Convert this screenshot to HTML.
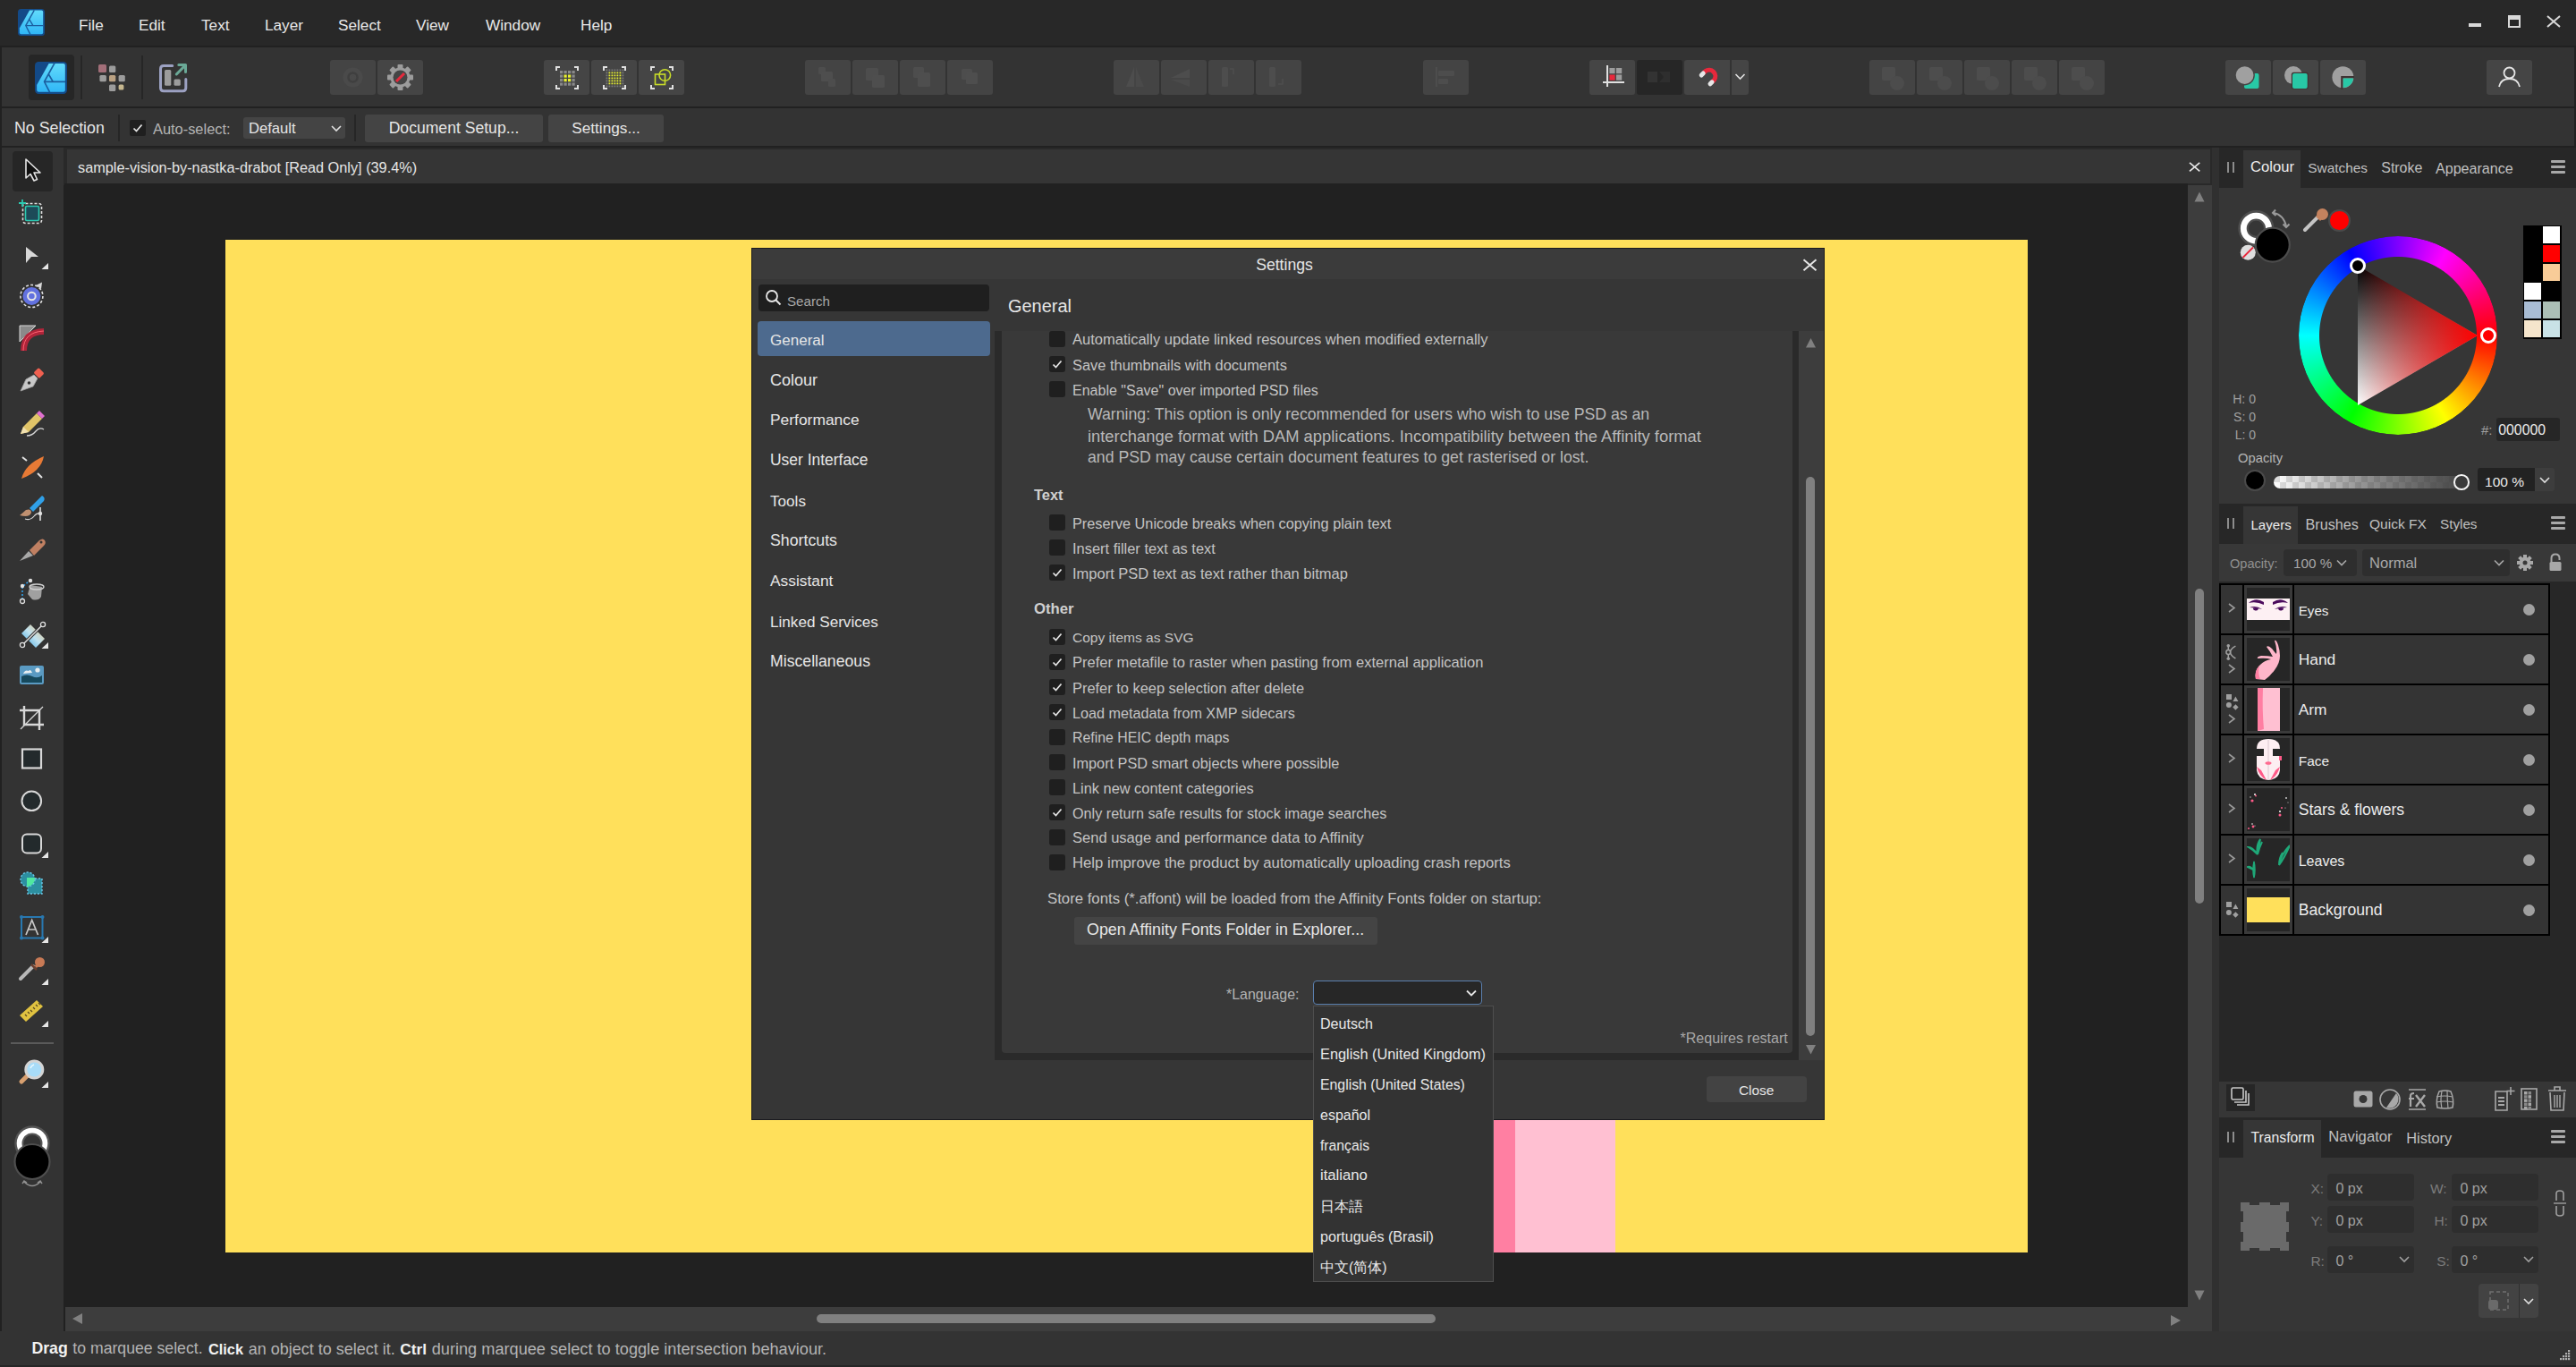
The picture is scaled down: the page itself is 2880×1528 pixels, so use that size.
<!DOCTYPE html>
<html><head><meta charset="utf-8">
<style>
*{box-sizing:border-box;margin:0;padding:0}
html,body{width:2880px;height:1528px;overflow:hidden}
body{position:relative;background:#212121;font-family:"Liberation Sans",sans-serif;color:#e6e6e6;font-size:17px}
.a{position:absolute}
.t{position:absolute;white-space:nowrap;line-height:1}
</style></head><body>
<div class="a" style="left:0px;top:0px;width:2880px;height:51px;background:#282828;"></div>
<div class="a" style="left:2px;top:53px;width:2876px;height:66px;background:#333333;"></div>
<div class="a" style="left:2px;top:121px;width:2876px;height:42px;background:#333333;"></div>
<div class="a" style="left:2px;top:165px;width:69px;height:1323px;background:#333333;"></div>
<div class="a" style="left:71px;top:165px;width:2410px;height:42px;background:#292929;"></div>
<div class="a" style="left:72px;top:205px;width:2374px;height:1256px;background:#212121;"></div>
<div class="a" style="left:75px;top:167px;width:2396px;height:38px;background:#353535;"></div>
<div class="a" style="left:2446px;top:207px;width:27px;height:1281px;background:#3d3d3d;"></div>
<div class="a" style="left:73px;top:1461px;width:2400px;height:27px;background:#3d3d3d;"></div>
<div class="a" style="left:0px;top:1488px;width:2880px;height:40px;background:#333333;"></div>
<div class="a" style="left:2481px;top:165px;width:399px;height:1323px;background:#353535;"></div>
<svg class="a" style="left:20px;top:10px" width="30.0" height="30.0" viewBox="0 0 30 30"><defs><linearGradient id="lg20" x1="0" y1="0" x2="0" y2="1"><stop offset="0" stop-color="#62dbfb"/><stop offset="1" stop-color="#30b6f6"/></linearGradient></defs>
<rect x="0" y="0" width="30" height="30" rx="3.5" fill="#134a88"/>
<path d="M13,1.6 L26.4,1.6 Q28.2,1.6 28.2,3.4 L28.2,26.4 Q28.2,28.2 26.4,28.2 L3.6,28.2 Q1.8,28.2 1.8,26.4 L1.8,21.6 Z" fill="url(#lg20)"/>
<path d="M18.3,1.4 L8.8,18.6 L13.8,28.4 M8.8,18.6 L28.4,18.6 M12.9,11.9 L16.8,18.4" stroke="#1b5fa0" stroke-width="1.4" fill="none"/></svg>
<div class="t" style="left:88.0px;top:20.4px;font-size:17.20px;color:#e8e8e8;">File</div>
<div class="t" style="left:155.0px;top:20.4px;font-size:17.20px;color:#e8e8e8;">Edit</div>
<div class="t" style="left:225.0px;top:20.4px;font-size:17.20px;color:#e8e8e8;">Text</div>
<div class="t" style="left:296.0px;top:20.4px;font-size:17.20px;color:#e8e8e8;">Layer</div>
<div class="t" style="left:378.0px;top:20.4px;font-size:17.20px;color:#e8e8e8;">Select</div>
<div class="t" style="left:465.0px;top:20.4px;font-size:17.20px;color:#e8e8e8;">View</div>
<div class="t" style="left:543.0px;top:20.4px;font-size:17.20px;color:#e8e8e8;">Window</div>
<div class="t" style="left:649.0px;top:20.4px;font-size:17.20px;color:#e8e8e8;">Help</div>
<div class="a" style="left:2760px;top:26px;width:14px;height:4px;background:#d8d8d8;"></div>
<div class="a" style="left:2804px;top:17px;width:14px;height:14px;border:2px solid #d8d8d8;border-top-width:5px"></div>
<svg class="a" style="left:2847px;top:17px;" width="16" height="14" viewBox="0 0 16 14"><path d="M1,1 L15,13 M15,1 L1,13" stroke="#d8d8d8" stroke-width="2"/></svg>
<div class="a" style="left:32px;top:61px;width:51px;height:51px;background:#262626;border-radius:4px"></div>
<svg class="a" style="left:39px;top:69px" width="36.0" height="36.0" viewBox="0 0 30 30"><defs><linearGradient id="lg39" x1="0" y1="0" x2="0" y2="1"><stop offset="0" stop-color="#62dbfb"/><stop offset="1" stop-color="#30b6f6"/></linearGradient></defs>
<rect x="0" y="0" width="30" height="30" rx="3.5" fill="#134a88"/>
<path d="M13,1.6 L26.4,1.6 Q28.2,1.6 28.2,3.4 L28.2,26.4 Q28.2,28.2 26.4,28.2 L3.6,28.2 Q1.8,28.2 1.8,26.4 L1.8,21.6 Z" fill="url(#lg39)"/>
<path d="M18.3,1.4 L8.8,18.6 L13.8,28.4 M8.8,18.6 L28.4,18.6 M12.9,11.9 L16.8,18.4" stroke="#1b5fa0" stroke-width="1.4" fill="none"/></svg>
<div class="a" style="left:90px;top:62px;width:2px;height:49px;background:#262626;"></div>
<div class="a" style="left:158px;top:62px;width:2px;height:49px;background:#262626;"></div>
<svg class="a" style="left:108px;top:70px;" width="36" height="36" viewBox="0 0 36 36"><rect x="2" y="2" width="9" height="9" rx="1.5" fill="#a36f79"/>
<rect x="14" y="3.4" width="7.3" height="7.5" rx="1.5" fill="#9c9c9c"/>
<rect x="3.4" y="14" width="7.5" height="7.3" rx="1.5" fill="#9c9c9c"/>
<rect x="14" y="14" width="7.3" height="7.3" rx="1.5" fill="#baa182"/>
<rect x="24.6" y="14" width="7.2" height="7.3" rx="1.5" fill="#9c9c9c"/>
<rect x="14" y="24.6" width="7.3" height="7.3" rx="1.5" fill="#9c9c9c"/>
<rect x="24.6" y="24.6" width="5.8" height="5.8" rx="1.5" fill="#c6b78f"/></svg>
<svg class="a" style="left:176px;top:70px;" width="34" height="34" viewBox="0 0 34 34"><path d="M16.7,3.5 L7,3.5 Q3.5,3.5 3.5,7 L3.5,28.3 Q3.5,31.8 7,31.8 L28.3,31.8 Q31.8,31.8 31.8,28.3 L31.8,18.4" stroke="#9ca1c2" stroke-width="3" fill="none" stroke-linecap="round"/>
<rect x="8" y="8" width="7.3" height="17.8" rx="1.5" fill="#9c9c9c"/>
<rect x="18.5" y="18.5" width="7.3" height="7.3" rx="1.5" fill="#9c9c9c"/>
<path d="M21.3,13 L30.5,3.6 M23.8,2.6 L31.5,2.6 L31.5,10.5" stroke="#6aa896" stroke-width="3" fill="none" stroke-linecap="round" stroke-linejoin="round"/></svg>
<div class="a" style="left:369px;top:67px;width:51px;height:39px;background:#444444;border-radius:3px"></div>
<svg class="a" style="left:369px;top:67px;" width="51" height="39" viewBox="0 0 51 39"><g fill="#4a4a4a"><circle cx="25.5" cy="19.5" r="11"/></g><circle cx="25.5" cy="19.5" r="5" fill="none" stroke="#3f3f3f" stroke-width="2.5"/><circle cx="25.5" cy="19.5" r="2" fill="#4a4a4a"/></svg>
<div class="a" style="left:422px;top:67px;width:51px;height:39px;background:#454545;border-radius:3px"></div>
<svg class="a" style="left:422px;top:67px;" width="51" height="39" viewBox="0 0 51 39"><rect x="22.5" y="5" width="6" height="6" rx="1" fill="#9c9c9c" transform="rotate(0 25.5 19.5)"/><rect x="22.5" y="5" width="6" height="6" rx="1" fill="#9c9c9c" transform="rotate(45 25.5 19.5)"/><rect x="22.5" y="5" width="6" height="6" rx="1" fill="#9c9c9c" transform="rotate(90 25.5 19.5)"/><rect x="22.5" y="5" width="6" height="6" rx="1" fill="#9c9c9c" transform="rotate(135 25.5 19.5)"/><rect x="22.5" y="5" width="6" height="6" rx="1" fill="#9c9c9c" transform="rotate(180 25.5 19.5)"/><rect x="22.5" y="5" width="6" height="6" rx="1" fill="#9c9c9c" transform="rotate(225 25.5 19.5)"/><rect x="22.5" y="5" width="6" height="6" rx="1" fill="#9c9c9c" transform="rotate(270 25.5 19.5)"/><rect x="22.5" y="5" width="6" height="6" rx="1" fill="#9c9c9c" transform="rotate(315 25.5 19.5)"/><circle cx="25.5" cy="19.5" r="11" fill="#9c9c9c"/><circle cx="25.5" cy="19.5" r="8" fill="#454545"/><path d="M21,24 L30,15" stroke="#e8283c" stroke-width="3"/></svg>
<div class="a" style="left:608px;top:67px;width:51px;height:39px;background:#454545;border-radius:3px"></div>
<div class="a" style="left:661px;top:67px;width:51px;height:39px;background:#454545;border-radius:3px"></div>
<div class="a" style="left:714px;top:67px;width:51px;height:39px;background:#454545;border-radius:3px"></div>
<svg class="a" style="left:608px;top:67px;" width="51" height="39" viewBox="0 0 51 39"><path d="M14,12 L14,8 L18,8 M34,8 L38,8 L38,12 M14,28 L14,32 L18,32 M34,32 L38,32 L38,28" stroke="#e0e0e0" stroke-width="2" fill="none"/><rect x="18.0" y="12.0" width="3.2" height="3.2" fill="#8a8a8a"/><rect x="18.0" y="16.5" width="3.2" height="3.2" fill="#8a8a8a"/><rect x="18.0" y="21.0" width="3.2" height="3.2" fill="#8a8a8a"/><rect x="18.0" y="25.5" width="3.2" height="3.2" fill="#8a8a8a"/><rect x="22.5" y="12.0" width="3.2" height="3.2" fill="#8a8a8a"/><rect x="22.5" y="16.5" width="3.2" height="3.2" fill="#e8f030"/><rect x="22.5" y="21.0" width="3.2" height="3.2" fill="#e8f030"/><rect x="22.5" y="25.5" width="3.2" height="3.2" fill="#8a8a8a"/><rect x="27.0" y="12.0" width="3.2" height="3.2" fill="#8a8a8a"/><rect x="27.0" y="16.5" width="3.2" height="3.2" fill="#e8f030"/><rect x="27.0" y="21.0" width="3.2" height="3.2" fill="#e8f030"/><rect x="27.0" y="25.5" width="3.2" height="3.2" fill="#8a8a8a"/><rect x="31.5" y="12.0" width="3.2" height="3.2" fill="#8a8a8a"/><rect x="31.5" y="16.5" width="3.2" height="3.2" fill="#8a8a8a"/><rect x="31.5" y="21.0" width="3.2" height="3.2" fill="#8a8a8a"/><rect x="31.5" y="25.5" width="3.2" height="3.2" fill="#8a8a8a"/></svg>
<svg class="a" style="left:661px;top:67px;" width="51" height="39" viewBox="0 0 51 39"><path d="M14,12 L14,8 L18,8 M34,8 L38,8 L38,12 M14,28 L14,32 L18,32 M34,32 L38,32 L38,28" stroke="#e0e0e0" stroke-width="2" fill="none"/><rect x="16.5" y="10.5" width="1.8" height="1.8" fill="#7a7a7a"/><rect x="16.5" y="13.5" width="1.8" height="1.8" fill="#7a7a7a"/><rect x="16.5" y="16.5" width="1.8" height="1.8" fill="#7a7a7a"/><rect x="16.5" y="19.5" width="1.8" height="1.8" fill="#7a7a7a"/><rect x="16.5" y="22.5" width="1.8" height="1.8" fill="#7a7a7a"/><rect x="16.5" y="25.5" width="1.8" height="1.8" fill="#7a7a7a"/><rect x="16.5" y="28.5" width="1.8" height="1.8" fill="#7a7a7a"/><rect x="19.5" y="10.5" width="1.8" height="1.8" fill="#7a7a7a"/><rect x="19.5" y="13.5" width="1.8" height="1.8" fill="#e8f030"/><rect x="19.5" y="16.5" width="1.8" height="1.8" fill="#e8f030"/><rect x="19.5" y="19.5" width="1.8" height="1.8" fill="#e8f030"/><rect x="19.5" y="22.5" width="1.8" height="1.8" fill="#e8f030"/><rect x="19.5" y="25.5" width="1.8" height="1.8" fill="#e8f030"/><rect x="19.5" y="28.5" width="1.8" height="1.8" fill="#7a7a7a"/><rect x="22.5" y="10.5" width="1.8" height="1.8" fill="#7a7a7a"/><rect x="22.5" y="13.5" width="1.8" height="1.8" fill="#e8f030"/><rect x="22.5" y="16.5" width="1.8" height="1.8" fill="#e8f030"/><rect x="22.5" y="19.5" width="1.8" height="1.8" fill="#e8f030"/><rect x="22.5" y="22.5" width="1.8" height="1.8" fill="#e8f030"/><rect x="22.5" y="25.5" width="1.8" height="1.8" fill="#e8f030"/><rect x="22.5" y="28.5" width="1.8" height="1.8" fill="#7a7a7a"/><rect x="25.5" y="10.5" width="1.8" height="1.8" fill="#7a7a7a"/><rect x="25.5" y="13.5" width="1.8" height="1.8" fill="#e8f030"/><rect x="25.5" y="16.5" width="1.8" height="1.8" fill="#e8f030"/><rect x="25.5" y="19.5" width="1.8" height="1.8" fill="#e8f030"/><rect x="25.5" y="22.5" width="1.8" height="1.8" fill="#e8f030"/><rect x="25.5" y="25.5" width="1.8" height="1.8" fill="#e8f030"/><rect x="25.5" y="28.5" width="1.8" height="1.8" fill="#7a7a7a"/><rect x="28.5" y="10.5" width="1.8" height="1.8" fill="#7a7a7a"/><rect x="28.5" y="13.5" width="1.8" height="1.8" fill="#e8f030"/><rect x="28.5" y="16.5" width="1.8" height="1.8" fill="#e8f030"/><rect x="28.5" y="19.5" width="1.8" height="1.8" fill="#e8f030"/><rect x="28.5" y="22.5" width="1.8" height="1.8" fill="#e8f030"/><rect x="28.5" y="25.5" width="1.8" height="1.8" fill="#e8f030"/><rect x="28.5" y="28.5" width="1.8" height="1.8" fill="#7a7a7a"/><rect x="31.5" y="10.5" width="1.8" height="1.8" fill="#7a7a7a"/><rect x="31.5" y="13.5" width="1.8" height="1.8" fill="#e8f030"/><rect x="31.5" y="16.5" width="1.8" height="1.8" fill="#e8f030"/><rect x="31.5" y="19.5" width="1.8" height="1.8" fill="#e8f030"/><rect x="31.5" y="22.5" width="1.8" height="1.8" fill="#e8f030"/><rect x="31.5" y="25.5" width="1.8" height="1.8" fill="#e8f030"/><rect x="31.5" y="28.5" width="1.8" height="1.8" fill="#7a7a7a"/><rect x="34.5" y="10.5" width="1.8" height="1.8" fill="#7a7a7a"/><rect x="34.5" y="13.5" width="1.8" height="1.8" fill="#7a7a7a"/><rect x="34.5" y="16.5" width="1.8" height="1.8" fill="#7a7a7a"/><rect x="34.5" y="19.5" width="1.8" height="1.8" fill="#7a7a7a"/><rect x="34.5" y="22.5" width="1.8" height="1.8" fill="#7a7a7a"/><rect x="34.5" y="25.5" width="1.8" height="1.8" fill="#7a7a7a"/><rect x="34.5" y="28.5" width="1.8" height="1.8" fill="#7a7a7a"/></svg>
<svg class="a" style="left:714px;top:67px;" width="51" height="39" viewBox="0 0 51 39"><path d="M14,12 L14,8 L18,8 M34,8 L38,8 L38,12 M14,28 L14,32 L18,32 M34,32 L38,32 L38,28" stroke="#e0e0e0" stroke-width="2" fill="none"/><rect x="18.5" y="16" width="11" height="11.5" fill="none" stroke="#c8dc28" stroke-width="1.6"/><circle cx="29.3" cy="17" r="6.3" fill="none" stroke="#c8dc28" stroke-width="1.6"/></svg>
<div class="a" style="left:900px;top:67px;width:51px;height:39px;background:#444444;border-radius:3px"></div>
<div class="a" style="left:953px;top:67px;width:51px;height:39px;background:#444444;border-radius:3px"></div>
<div class="a" style="left:1006px;top:67px;width:51px;height:39px;background:#444444;border-radius:3px"></div>
<div class="a" style="left:1059px;top:67px;width:51px;height:39px;background:#444444;border-radius:3px"></div>
<svg class="a" style="left:900px;top:67px;" width="51" height="39" viewBox="0 0 51 39"><rect x="15" y="8" width="8" height="8" rx="1.5" fill="#4d4d4d"/><rect x="18" y="13" width="13" height="11" rx="1.5" fill="#4e4e4e"/><rect x="26" y="21" width="8" height="9" rx="1.5" fill="#4d4d4d"/></svg>
<svg class="a" style="left:953px;top:67px;" width="51" height="39" viewBox="0 0 51 39"><rect x="15" y="9" width="14" height="14" rx="1.5" fill="#4d4d4d"/><rect x="22" y="17" width="14" height="14" rx="1.5" fill="#4e4e4e"/></svg>
<svg class="a" style="left:1006px;top:67px;" width="51" height="39" viewBox="0 0 51 39"><rect x="15" y="8" width="12" height="12" rx="1.5" fill="#4d4d4d"/><rect x="20" y="14" width="14" height="16" rx="1.5" fill="#4e4e4e"/></svg>
<svg class="a" style="left:1059px;top:67px;" width="51" height="39" viewBox="0 0 51 39"><rect x="16" y="10" width="12" height="12" rx="1.5" fill="#4d4d4d"/><rect x="21" y="14" width="13" height="13" rx="1.5" fill="#4e4e4e"/></svg>
<div class="a" style="left:1245px;top:67px;width:51px;height:39px;background:#444444;border-radius:3px"></div>
<div class="a" style="left:1298px;top:67px;width:51px;height:39px;background:#444444;border-radius:3px"></div>
<div class="a" style="left:1351px;top:67px;width:51px;height:39px;background:#444444;border-radius:3px"></div>
<div class="a" style="left:1404px;top:67px;width:51px;height:39px;background:#444444;border-radius:3px"></div>
<svg class="a" style="left:1245px;top:67px;" width="51" height="39" viewBox="0 0 51 39"><path d="M14,30 L23,8 L23,30 Z" fill="#4d4d4d"/><path d="M25,8 L25,30 L34,30 Z" fill="#4a4a4a"/></svg>
<svg class="a" style="left:1298px;top:67px;" width="51" height="39" viewBox="0 0 51 39"><path d="M11,20 L32,10 L32,20 Z" fill="#4d4d4d"/><path d="M11,22 L32,22 L32,30 Z" fill="#4a4a4a"/></svg>
<svg class="a" style="left:1351px;top:67px;" width="51" height="39" viewBox="0 0 51 39"><rect x="15" y="8" width="7" height="22" rx="1.5" fill="#4d4d4d"/><path d="M28,16 L28,10 L24,10" stroke="#4d4d4d" stroke-width="1.5" fill="none"/></svg>
<svg class="a" style="left:1404px;top:67px;" width="51" height="39" viewBox="0 0 51 39"><rect x="15" y="8" width="7" height="22" rx="1.5" fill="#4d4d4d"/><path d="M30,21 L30,27 L25,27" stroke="#4d4d4d" stroke-width="1.5" fill="none"/></svg>
<div class="a" style="left:1591px;top:67px;width:51px;height:39px;background:#444444;border-radius:3px"></div>
<svg class="a" style="left:1591px;top:67px;" width="51" height="39" viewBox="0 0 51 39"><rect x="14" y="8" width="2" height="22" fill="#4d4d4d"/><rect x="17" y="12" width="18" height="6" rx="1" fill="#4d4d4d"/><rect x="17" y="21" width="11" height="6" rx="1" fill="#4d4d4d"/></svg>
<div class="a" style="left:1777px;top:67px;width:51px;height:39px;background:#454545;border-radius:3px"></div>
<svg class="a" style="left:1777px;top:67px;" width="51" height="39" viewBox="0 0 51 39"><path d="M20,6 L20,30 M15,25 L39,25" stroke="#e0e0e0" stroke-width="2"/><rect x="22.4" y="9" width="6.2" height="6.2" fill="#9c9c9c"/><rect x="30" y="9" width="6.2" height="6.2" fill="#9c9c9c"/><rect x="22.4" y="16.5" width="6.2" height="6.2" fill="#e8283c"/><rect x="30" y="16.5" width="6.2" height="6.2" fill="#9c9c9c"/></svg>
<div class="a" style="left:1830px;top:67px;width:51px;height:39px;background:#262626;border-radius:3px"></div>
<svg class="a" style="left:1830px;top:67px;" width="51" height="39" viewBox="0 0 51 39"><rect x="12" y="13" width="11" height="12" fill="#333"/><path d="M25,13 L37,13 L37,25 L25,25 L30,19 Z" fill="#2e2e2e"/></svg>
<div class="a" style="left:1883px;top:67px;width:72px;height:39px;background:#454545;border-radius:3px"></div>
<div class="a" style="left:1934px;top:67px;width:2px;height:39px;background:#333333;"></div>
<svg class="a" style="left:1883px;top:67px;" width="51" height="39" viewBox="0 0 51 39"><path d="M21.2,15 L23.6,12.6 A7,7 0 0 1 33.4,22.4 L31,24.8" stroke="#e8283c" stroke-width="5" fill="none"/><path d="M21.2,15 L19.2,17 M31,24.8 L29,26.8" stroke="#e6e6e6" stroke-width="5" stroke-linecap="round"/></svg>
<svg class="a" style="left:1936px;top:67px;" width="19" height="39" viewBox="0 0 19 39"><path d="M4.5,16 L9.5,21 L14.5,16" stroke="#e0e0e0" stroke-width="1.6" fill="none"/></svg>
<div class="a" style="left:2090px;top:67px;width:51px;height:39px;background:#444444;border-radius:3px"></div>
<div class="a" style="left:2143px;top:67px;width:51px;height:39px;background:#444444;border-radius:3px"></div>
<div class="a" style="left:2196px;top:67px;width:51px;height:39px;background:#444444;border-radius:3px"></div>
<div class="a" style="left:2249px;top:67px;width:51px;height:39px;background:#444444;border-radius:3px"></div>
<div class="a" style="left:2302px;top:67px;width:51px;height:39px;background:#444444;border-radius:3px"></div>
<svg class="a" style="left:2090px;top:67px;" width="51" height="39" viewBox="0 0 51 39"><rect x="14" y="8" width="15" height="15" rx="2" fill="#4d4d4d"/><circle cx="31" cy="26" r="8" fill="#4c4c4c"/></svg>
<svg class="a" style="left:2143px;top:67px;" width="51" height="39" viewBox="0 0 51 39"><rect x="14" y="8" width="15" height="15" rx="2" fill="#4d4d4d"/><circle cx="31" cy="26" r="8" fill="#4c4c4c"/></svg>
<svg class="a" style="left:2196px;top:67px;" width="51" height="39" viewBox="0 0 51 39"><rect x="14" y="8" width="15" height="15" rx="2" fill="#4d4d4d"/><circle cx="31" cy="26" r="8" fill="#4c4c4c"/></svg>
<svg class="a" style="left:2249px;top:67px;" width="51" height="39" viewBox="0 0 51 39"><rect x="14" y="8" width="15" height="15" rx="2" fill="#4d4d4d"/><circle cx="31" cy="26" r="8" fill="#4c4c4c"/></svg>
<svg class="a" style="left:2302px;top:67px;" width="51" height="39" viewBox="0 0 51 39"><rect x="14" y="8" width="15" height="15" rx="2" fill="#4d4d4d"/><circle cx="31" cy="26" r="8" fill="#4c4c4c"/></svg>
<div class="a" style="left:2488px;top:67px;width:51px;height:39px;background:#454545;border-radius:3px"></div>
<div class="a" style="left:2541px;top:67px;width:51px;height:39px;background:#454545;border-radius:3px"></div>
<div class="a" style="left:2594px;top:67px;width:51px;height:39px;background:#454545;border-radius:3px"></div>
<svg class="a" style="left:2488px;top:67px;" width="51" height="39" viewBox="0 0 51 39"><rect x="21" y="14.9" width="16.5" height="17" rx="2" fill="#28c8a6"/><circle cx="21.6" cy="17.1" r="11.3" fill="#454545"/><circle cx="21.6" cy="17.1" r="9.9" fill="#a0a0a0"/></svg>
<svg class="a" style="left:2541px;top:67px;" width="51" height="39" viewBox="0 0 51 39"><circle cx="23" cy="17.1" r="10" fill="#a0a0a0"/><rect x="20.8" y="13.8" width="19" height="19" rx="2.5" fill="#3f3333"/><rect x="22" y="15" width="16.7" height="17" rx="2" fill="#28c8a6"/></svg>
<svg class="a" style="left:2594px;top:67px;" width="51" height="39" viewBox="0 0 51 39"><circle cx="25.4" cy="19.3" r="12" fill="#a0a0a0"/><path d="M24.4,33 L24.4,19.3 L38,19.3" stroke="#3f3333" stroke-width="2.4" fill="none"/><path d="M25.6,20.5 L37.2,20.5 A12,12 0 0 1 25.6,31.2 Z" fill="#28c8a6"/></svg>
<div class="a" style="left:2780px;top:67px;width:51px;height:39px;background:#454545;border-radius:3px"></div>
<svg class="a" style="left:2780px;top:67px;" width="51" height="39" viewBox="0 0 51 39"><circle cx="25.5" cy="14.5" r="6" fill="none" stroke="#e6e6e6" stroke-width="1.8"/><path d="M14,30 Q16,21 25.5,21 Q35,21 37,30" fill="none" stroke="#e6e6e6" stroke-width="1.8"/></svg>
<div class="t" style="left:16.0px;top:134.9px;font-size:17.80px;color:#e6e6e6;">No Selection</div>
<div class="a" style="left:132px;top:128px;width:2px;height:30px;background:#262626;"></div>
<div class="a" style="left:145px;top:134px;width:18px;height:18px;background:#1f1f1f;border-radius:2px"></div>
<svg class="a" style="left:145px;top:134px;" width="18" height="18" viewBox="0 0 18 18"><path d="M4.5,9.5 L7.5,12.5 L13.5,5.5" stroke="#e6e6e6" stroke-width="1.7" fill="none"/></svg>
<div class="t" style="left:171.0px;top:136.1px;font-size:16.40px;color:#b4b4b4;">Auto-select:</div>
<div class="a" style="left:272px;top:131px;width:114px;height:24px;background:#444444;border-radius:3px"></div>
<div class="t" style="left:278.0px;top:135.9px;font-size:16.60px;color:#e6e6e6;">Default</div>
<svg class="a" style="left:367px;top:134px;" width="18" height="18" viewBox="0 0 18 18"><path d="M4,7 L9,12 L14,7" stroke="#e0e0e0" stroke-width="1.6" fill="none"/></svg>
<div class="a" style="left:396px;top:128px;width:2px;height:30px;background:#262626;"></div>
<div class="a" style="left:408px;top:128px;width:199px;height:31px;background:#444444;border-radius:3px"></div>
<div class="t" style="left:207.5px;width:600px;text-align:center;top:135.1px;font-size:17.60px;color:#e6e6e6;font-weight:400">Document Setup...</div>
<div class="a" style="left:613px;top:128px;width:129px;height:31px;background:#444444;border-radius:3px"></div>
<div class="t" style="left:377.5px;width:600px;text-align:center;top:135.4px;font-size:17.20px;color:#e6e6e6;font-weight:400">Settings...</div>
<div class="t" style="left:87.0px;top:178.7px;font-size:16.30px;color:#e6e6e6;">sample-vision-by-nastka-drabot [Read Only] (39.4%)</div>
<svg class="a" style="left:2446px;top:180px;" width="15" height="13" viewBox="0 0 15 13"><path d="M2,1.8 L13.3,11.3 M13.3,1.8 L2,11.3" stroke="#e6e6e6" stroke-width="1.7"/></svg>
<div class="a" style="left:14px;top:169px;width:45px;height:45px;background:#262626;border-radius:4px"></div>
<svg class="a" style="left:20px;top:172px;" width="36" height="36" viewBox="0 0 36 36"><path d="M9,6 L9,27 L14,22.5 L18,30 L21.5,28.5 L18,21 L25,21 Z" fill="#111" stroke="#e6e6e6" stroke-width="1.6" stroke-linejoin="round"/></svg>
<svg class="a" style="left:20px;top:220px;" width="36" height="36" viewBox="0 0 36 36"><rect x="5.5" y="7.5" width="21" height="22" rx="3" fill="none" stroke="#e0e0e0" stroke-width="1.6" stroke-dasharray="3 2"/><rect x="8.5" y="10.5" width="15" height="16" rx="1.5" fill="#1d4a58" stroke="#2cc8b0" stroke-width="1.6"/><path d="M5,3 L5,11 M1,7 L9,7" stroke="#2cc8b0" stroke-width="1.8"/></svg>
<svg class="a" style="left:20px;top:268px;" width="36" height="36" viewBox="0 0 36 36"><path d="M9,8 L9,26 L15,19 L23,19 Z" fill="#d8d8d8"/></svg>
<svg class="a" style="left:45px;top:293px;" width="10" height="10" viewBox="0 0 10 10"><path d="M9,1 L9,8 L1.5,8 Z" fill="#e6e6e6"/></svg>
<svg class="a" style="left:18px;top:313px;" width="36" height="36" viewBox="0 0 36 36"><circle cx="17.4" cy="18" r="12.5" fill="none" stroke="#e0e0e0" stroke-width="1.6" stroke-dasharray="3 2.2"/><circle cx="17.4" cy="18" r="10" fill="#6271df"/><circle cx="17.4" cy="18" r="4.3" fill="none" stroke="#e6e6e6" stroke-width="2"/><path d="M22,6 L29,2.5 L28,10 Z" fill="#d8d8d8"/></svg>
<svg class="a" style="left:20px;top:362px;" width="36" height="36" viewBox="0 0 36 36"><path d="M2,2 L20,2 L2,20 Z" fill="#8a8a8a" stroke="#d8d8d8" stroke-width="1"/><path d="M3,30 Q3,6 29,5 L29,12 Q10,12 10,30 Z" fill="#b0253a"/><path d="M6,30 Q6,9 29,8" stroke="#ff6070" stroke-width="1" fill="none"/></svg>
<svg class="a" style="left:20px;top:410px;" width="36" height="36" viewBox="0 0 36 36"><path d="M3,27 L9,14 L18,9 L22,13 L17,22 Z" fill="#c8c8c8" stroke="#a0a0a0" stroke-width="0.8"/><circle cx="12.5" cy="18" r="1.8" fill="#333"/><rect x="19" y="3" width="9" height="8" rx="1.5" fill="#f06050" transform="rotate(45 23.5 7)"/></svg>
<svg class="a" style="left:20px;top:457px;" width="36" height="36" viewBox="0 0 36 36"><path d="M3,28 L6,20 L21,5 L27,11 L12,26 Z" fill="#e0c468"/><path d="M3,28 L6,20 L12,26 Z" fill="#f0e0b0"/><path d="M21,5 L24,2 L30,8 L27,11 Z" fill="#e070d0"/><path d="M10,30 Q16,30 20,25 Q24,20 29,23" stroke="#d8d8d8" stroke-width="1.3" fill="none"/></svg>
<svg class="a" style="left:20px;top:505px;" width="36" height="36" viewBox="0 0 36 36"><path d="M4,30 Q8,14 29,5 Q26,22 4,30 Z" fill="#e87a35"/><path d="M5,6 L10,10 M22,24 L27,29" stroke="#e0e0e0" stroke-width="2"/></svg>
<svg class="a" style="left:20px;top:551px;" width="36" height="36" viewBox="0 0 36 36"><path d="M13,17 L27,3 Q31,5 29,9 L17,21 Z" fill="#30a0e8"/><path d="M2,25 Q6,22 9,19 Q15,17 15,22 Q13,28 2,25 Z" fill="#c09070"/><path d="M8,29 Q14,31 18,26 Q21,22 25,23" stroke="#d8d8d8" stroke-width="1.2" fill="none"/><path d="M25,16 L25,31" stroke="#e0e0e0" stroke-width="1.6"/><circle cx="25" cy="23" r="2.2" fill="#e0e0e0"/></svg>
<svg class="a" style="left:20px;top:598px;" width="36" height="36" viewBox="0 0 36 36"><path d="M2,29 L12,18 L17,23 Z" fill="#a8a8a8"/><path d="M13,17 L24,6 Q28,3 30,6 Q32,9 29,12 L18,23 Z" fill="#c08062"/><circle cx="26" cy="8" r="1.5" fill="#333"/></svg>
<svg class="a" style="left:20px;top:645px;" width="36" height="36" viewBox="0 0 36 36"><path d="M14,9 L27,11 L26,22 Q23,27 16,25 L11,19 Z" fill="#a0a0a0"/><ellipse cx="21" cy="11" rx="8" ry="3" fill="none" stroke="#d0d0d0" stroke-width="1.4"/><path d="M5,25 L5,11 L13,4" stroke="#30a0e8" stroke-width="1.6" stroke-dasharray="2 2" fill="none"/><circle cx="5" cy="27" r="2.5" fill="none" stroke="#e0e0e0" stroke-width="1.3"/><circle cx="5" cy="10" r="2.2" fill="#e0e0e0"/><circle cx="14" cy="4" r="2.2" fill="#e0e0e0"/></svg>
<svg class="a" style="left:20px;top:692px;" width="36" height="36" viewBox="0 0 36 36"><defs><linearGradient id="gt1" x1="0" y1="1" x2="1" y2="0"><stop offset="0" stop-color="#30a0e0"/><stop offset="0.5" stop-color="#bfe2f0"/><stop offset="1" stop-color="#e8c080"/></linearGradient></defs><path d="M4,16 L14,6 L30,22 L20,32 Z" fill="url(#gt1)" transform="rotate(0)"/><path d="M5,29 L28,6" stroke="#333" stroke-width="3.5"/><path d="M5,29 L28,6" stroke="#e0e0e0" stroke-width="1.4"/><circle cx="5" cy="29" r="2.6" fill="#333" stroke="#e0e0e0" stroke-width="1.3"/><circle cx="28" cy="6" r="2.6" fill="#333" stroke="#e0e0e0" stroke-width="1.3"/></svg>
<svg class="a" style="left:45px;top:717px;" width="10" height="10" viewBox="0 0 10 10"><path d="M9,1 L9,8 L1.5,8 Z" fill="#e6e6e6"/></svg>
<svg class="a" style="left:20px;top:740px;" width="36" height="36" viewBox="0 0 36 36"><rect x="2" y="4" width="27" height="21" rx="2" fill="#5a9ac2"/><path d="M4,16 Q10,13 16,16 Q22,19 27,15 L27,23 L4,23 Z" fill="#17495c"/><circle cx="22" cy="9" r="2.6" fill="#e8eef0"/><path d="M6,13 Q8,8 12,10 Q14,7 16,12 Z" fill="#e8eef0"/></svg>
<svg class="a" style="left:20px;top:786px;" width="36" height="36" viewBox="0 0 36 36"><path d="M7,3 L7,24 L29,24 M2,8 L24,8 L24,30" stroke="#d8d8d8" stroke-width="2.4" fill="none"/><path d="M3,29 L28,4" stroke="#d8d8d8" stroke-width="1.2"/></svg>
<svg class="a" style="left:20px;top:833px;" width="36" height="36" viewBox="0 0 36 36"><rect x="5" y="4.5" width="21" height="21" fill="#232a2c" stroke="#d8d8d8" stroke-width="2.2"/></svg>
<svg class="a" style="left:20px;top:880px;" width="36" height="36" viewBox="0 0 36 36"><circle cx="15.3" cy="15.3" r="10.8" fill="#232a2c" stroke="#d8d8d8" stroke-width="2"/></svg>
<svg class="a" style="left:20px;top:928px;" width="36" height="36" viewBox="0 0 36 36"><rect x="5" y="4.5" width="21" height="21" rx="5" fill="#232a2c" stroke="#d8d8d8" stroke-width="2"/></svg>
<svg class="a" style="left:45px;top:951px;" width="10" height="10" viewBox="0 0 10 10"><path d="M9,1 L9,8 L1.5,8 Z" fill="#e6e6e6"/></svg>
<svg class="a" style="left:20px;top:973px;" width="36" height="36" viewBox="0 0 36 36"><rect x="11" y="9" width="16" height="17" fill="#2c8fa0" stroke="#6cc8e8" stroke-width="1.4" stroke-dasharray="2.2 1.8"/><circle cx="11" cy="10" r="8" fill="#2c8fa0" stroke="#6cc8e8" stroke-width="1.4" stroke-dasharray="2.2 1.8"/><path d="M10,8 L19,8 A10,10 0 0 1 10,18.5 Z" fill="#50e8a0"/></svg>
<svg class="a" style="left:20px;top:1021px;" width="36" height="36" viewBox="0 0 36 36"><rect x="4" y="4" width="23.5" height="23.5" fill="none" stroke="#2878b0" stroke-width="2"/><circle cx="4" cy="4" r="2" fill="#2878b0"/><circle cx="27.5" cy="4" r="2" fill="#2878b0"/><circle cx="4" cy="27.5" r="2" fill="#2878b0"/><circle cx="27.5" cy="27.5" r="2" fill="#2878b0"/><path d="M9,24 L15.7,7.5 L22.5,24 M11.5,18 L20,18" stroke="#c8c8c8" stroke-width="1.7" fill="none"/></svg>
<svg class="a" style="left:45px;top:1046px;" width="10" height="10" viewBox="0 0 10 10"><path d="M9,1 L9,8 L1.5,8 Z" fill="#e6e6e6"/></svg>
<svg class="a" style="left:20px;top:1068px;" width="36" height="36" viewBox="0 0 36 36"><path d="M3,26 L17,12" stroke="#b8b8b8" stroke-width="4" stroke-linecap="round"/><path d="M15,10 L21,16" stroke="#6a4030" stroke-width="2.5"/><circle cx="24.5" cy="7.5" r="5.5" fill="#c87a55"/><path d="M18,11 L21,14 L25,10 Z" fill="#c87a55"/></svg>
<svg class="a" style="left:45px;top:1093px;" width="10" height="10" viewBox="0 0 10 10"><path d="M9,1 L9,8 L1.5,8 Z" fill="#e6e6e6"/></svg>
<svg class="a" style="left:20px;top:1114px;" width="36" height="36" viewBox="0 0 36 36"><path d="M2,21 L21,4 L28,11 L9,28 Z" fill="#e0c240"/><path d="M8,20 L10,22 M11,17 L13,19 M14,15 L16,17 M17,12 L19,14 M20,9 L22,11 M23,7 L25,9" stroke="#5a4a20" stroke-width="1.2"/></svg>
<svg class="a" style="left:45px;top:1140px;" width="10" height="10" viewBox="0 0 10 10"><path d="M9,1 L9,8 L1.5,8 Z" fill="#e6e6e6"/></svg>
<div class="a" style="left:12px;top:1165px;width:48px;height:2px;background:#5a5a5a;"></div>
<svg class="a" style="left:20px;top:1180px;" width="36" height="36" viewBox="0 0 36 36"><path d="M4,29 L12,21" stroke="#d8a070" stroke-width="5" stroke-linecap="round"/><circle cx="18.3" cy="15.5" r="9.5" fill="#a8dcf8" stroke="#d4d4d4" stroke-width="3"/><path d="M14,14 Q15,11 18,10" stroke="#e8f8ff" stroke-width="1.5" fill="none"/></svg>
<svg class="a" style="left:45px;top:1208px;" width="10" height="10" viewBox="0 0 10 10"><path d="M9,1 L9,8 L1.5,8 Z" fill="#e6e6e6"/></svg>
<svg class="a" style="left:10px;top:1255px;" width="54" height="80" viewBox="0 0 54 80"><circle cx="26" cy="23" r="18.5" fill="#ffffff" stroke="#555" stroke-width="2.4"/><circle cx="26" cy="23" r="10.5" fill="#333" stroke="#555" stroke-width="2"/><circle cx="26" cy="43.5" r="19.5" fill="#000" stroke="#4e4e4e" stroke-width="2.2"/><path d="M17,66 Q26,75 35,66 M15,68 L17,65 L20,67 M37,68 L35,65 L32,67" stroke="#909090" stroke-width="1.5" fill="none"/></svg>
<div class="a" style="left:252px;top:268px;width:2015px;height:1132px;background:#ffe05b;"></div>
<div class="a" style="left:1670px;top:1252px;width:24px;height:148px;background:#ff7fa2;"></div>
<div class="a" style="left:1694px;top:1252px;width:112px;height:148px;background:#ffc0d2;"></div>
<div class="a" style="left:840px;top:277px;width:1200px;height:975px;background:#363636;border:1px solid #1a1a1e"></div>
<div class="a" style="left:841px;top:278px;width:1198px;height:34px;background:#3b3b3b;"></div>
<div class="t" style="left:1136.0px;width:600px;text-align:center;top:288.1px;font-size:17.60px;color:#e6e6e6;font-weight:400">Settings</div>
<svg class="a" style="left:2015px;top:289px;" width="17" height="15" viewBox="0 0 17 15"><path d="M1.5,1.2 L15.5,13.3 M15.5,1.2 L1.5,13.3" stroke="#e6e6e6" stroke-width="1.9"/></svg>
<div class="a" style="left:848px;top:318px;width:258px;height:30px;background:#1f1f1f;border-radius:4px"></div>
<svg class="a" style="left:854px;top:322px;" width="22" height="22" viewBox="0 0 22 22"><circle cx="9" cy="9" r="6" fill="none" stroke="#e6e6e6" stroke-width="1.8"/><path d="M13.3,13.3 L18.5,18.5" stroke="#e6e6e6" stroke-width="2"/></svg>
<div class="t" style="left:880.0px;top:329.2px;font-size:15.15px;color:#a8a8a8;">Search</div>
<div class="a" style="left:847px;top:359px;width:260px;height:39px;background:#4d6a8e;border-radius:4px"></div>
<div class="t" style="left:861.0px;top:371.6px;font-size:17.03px;color:#e6e6e6;">General</div>
<div class="t" style="left:861.0px;top:415.7px;font-size:18.02px;color:#e6e6e6;">Colour</div>
<div class="t" style="left:861.0px;top:461.3px;font-size:17.42px;color:#e6e6e6;">Performance</div>
<div class="t" style="left:861.0px;top:506.2px;font-size:17.44px;color:#e6e6e6;">User Interface</div>
<div class="t" style="left:861.0px;top:551.5px;font-size:17.13px;color:#e6e6e6;">Tools</div>
<div class="t" style="left:861.0px;top:596.0px;font-size:17.75px;color:#e6e6e6;">Shortcuts</div>
<div class="t" style="left:861.0px;top:641.3px;font-size:17.38px;color:#e6e6e6;">Assistant</div>
<div class="t" style="left:861.0px;top:686.5px;font-size:17.14px;color:#e6e6e6;">Linked Services</div>
<div class="t" style="left:861.0px;top:731.0px;font-size:17.68px;color:#e6e6e6;">Miscellaneous</div>
<div class="t" style="left:1127.0px;top:333.1px;font-size:19.96px;color:#e6e6e6;">General</div>
<div class="a" style="left:1112px;top:370px;width:899px;height:815px;background:#2a2a2a;"></div>
<div class="a" style="left:1120px;top:370px;width:884px;height:807px;background:#393939;border-radius:0 0 4px 4px"></div>
<div class="a" style="left:2011px;top:370px;width:28px;height:815px;background:#3d3d3d;"></div>
<svg class="a" style="left:2018px;top:377px;" width="13" height="13" viewBox="0 0 13 13"><path d="M6.5,1 L12,11.5 L1,11.5 Z" fill="#808080"/></svg>
<div class="a" style="left:2019px;top:533px;width:10px;height:625px;background:#808080;border-radius:5px"></div>
<svg class="a" style="left:2018px;top:1167px;" width="13" height="13" viewBox="0 0 13 13"><path d="M1,1 L12,1 L6.5,11.5 Z" fill="#808080"/></svg>
<div class="a" style="left:1173px;top:370px;width:18px;height:18px;background:#1f1f1f;border-radius:3px"></div>
<div class="t" style="left:1199.0px;top:371.6px;font-size:16.53px;color:#c4c4c4;">Automatically update linked resources when modified externally</div>
<div class="a" style="left:1173px;top:398px;width:18px;height:18px;background:#1f1f1f;border-radius:3px"></div>
<svg class="a" style="left:1173px;top:398px;" width="18" height="18" viewBox="0 0 18 18"><path d="M4.5,9.5 L7.5,12.5 L13.5,5.5" stroke="#e6e6e6" stroke-width="1.7" fill="none"/></svg>
<div class="t" style="left:1199.0px;top:399.7px;font-size:16.42px;color:#c4c4c4;">Save thumbnails with documents</div>
<div class="a" style="left:1173px;top:426px;width:18px;height:18px;background:#1f1f1f;border-radius:3px"></div>
<div class="t" style="left:1199.0px;top:428.0px;font-size:16.02px;color:#c4c4c4;">Enable &quot;Save&quot; over imported PSD files</div>
<div class="t" style="left:1216.0px;top:455.4px;font-size:17.71px;color:#b8b8b8;">Warning: This option is only recommended for users who wish to use PSD as an</div>
<div class="t" style="left:1216.0px;top:478.9px;font-size:18.35px;color:#b8b8b8;">interchange format with DAM applications. Incompatibility between the Affinity format</div>
<div class="t" style="left:1216.0px;top:503.4px;font-size:17.71px;color:#b8b8b8;">and PSD may cause certain document features to get rasterised or lost.</div>
<div class="t" style="left:1156.0px;top:545.1px;font-size:16.40px;color:#d0d0d0;font-weight:700;">Text</div>
<div class="a" style="left:1173px;top:575px;width:18px;height:18px;background:#1f1f1f;border-radius:3px"></div>
<div class="t" style="left:1199.0px;top:576.8px;font-size:16.27px;color:#c4c4c4;">Preserve Unicode breaks when copying plain text</div>
<div class="a" style="left:1173px;top:603px;width:18px;height:18px;background:#1f1f1f;border-radius:3px"></div>
<div class="t" style="left:1199.0px;top:604.7px;font-size:16.45px;color:#c4c4c4;">Insert filler text as text</div>
<div class="a" style="left:1173px;top:631px;width:18px;height:18px;background:#1f1f1f;border-radius:3px"></div>
<svg class="a" style="left:1173px;top:631px;" width="18" height="18" viewBox="0 0 18 18"><path d="M4.5,9.5 L7.5,12.5 L13.5,5.5" stroke="#e6e6e6" stroke-width="1.7" fill="none"/></svg>
<div class="t" style="left:1199.0px;top:632.6px;font-size:16.49px;color:#c4c4c4;">Import PSD text as text rather than bitmap</div>
<div class="t" style="left:1156.0px;top:672.8px;font-size:16.72px;color:#d0d0d0;font-weight:700;">Other</div>
<div class="a" style="left:1173px;top:703px;width:18px;height:18px;background:#1f1f1f;border-radius:3px"></div>
<svg class="a" style="left:1173px;top:703px;" width="18" height="18" viewBox="0 0 18 18"><path d="M4.5,9.5 L7.5,12.5 L13.5,5.5" stroke="#e6e6e6" stroke-width="1.7" fill="none"/></svg>
<div class="t" style="left:1199.0px;top:705.4px;font-size:15.56px;color:#c4c4c4;">Copy items as SVG</div>
<div class="a" style="left:1173px;top:731px;width:18px;height:18px;background:#1f1f1f;border-radius:3px"></div>
<svg class="a" style="left:1173px;top:731px;" width="18" height="18" viewBox="0 0 18 18"><path d="M4.5,9.5 L7.5,12.5 L13.5,5.5" stroke="#e6e6e6" stroke-width="1.7" fill="none"/></svg>
<div class="t" style="left:1199.0px;top:732.6px;font-size:16.55px;color:#c4c4c4;">Prefer metafile to raster when pasting from external application</div>
<div class="a" style="left:1173px;top:759px;width:18px;height:18px;background:#1f1f1f;border-radius:3px"></div>
<svg class="a" style="left:1173px;top:759px;" width="18" height="18" viewBox="0 0 18 18"><path d="M4.5,9.5 L7.5,12.5 L13.5,5.5" stroke="#e6e6e6" stroke-width="1.7" fill="none"/></svg>
<div class="t" style="left:1199.0px;top:760.7px;font-size:16.41px;color:#c4c4c4;">Prefer to keep selection after delete</div>
<div class="a" style="left:1173px;top:787px;width:18px;height:18px;background:#1f1f1f;border-radius:3px"></div>
<svg class="a" style="left:1173px;top:787px;" width="18" height="18" viewBox="0 0 18 18"><path d="M4.5,9.5 L7.5,12.5 L13.5,5.5" stroke="#e6e6e6" stroke-width="1.7" fill="none"/></svg>
<div class="t" style="left:1199.0px;top:788.9px;font-size:16.19px;color:#c4c4c4;">Load metadata from XMP sidecars</div>
<div class="a" style="left:1173px;top:815px;width:18px;height:18px;background:#1f1f1f;border-radius:3px"></div>
<div class="t" style="left:1199.0px;top:817.2px;font-size:15.86px;color:#c4c4c4;">Refine HEIC depth maps</div>
<div class="a" style="left:1173px;top:843px;width:18px;height:18px;background:#1f1f1f;border-radius:3px"></div>
<div class="t" style="left:1199.0px;top:844.8px;font-size:16.27px;color:#c4c4c4;">Import PSD smart objects where possible</div>
<div class="a" style="left:1173px;top:871px;width:18px;height:18px;background:#1f1f1f;border-radius:3px"></div>
<div class="t" style="left:1199.0px;top:872.7px;font-size:16.38px;color:#c4c4c4;">Link new content categories</div>
<div class="a" style="left:1173px;top:899px;width:18px;height:18px;background:#1f1f1f;border-radius:3px"></div>
<svg class="a" style="left:1173px;top:899px;" width="18" height="18" viewBox="0 0 18 18"><path d="M4.5,9.5 L7.5,12.5 L13.5,5.5" stroke="#e6e6e6" stroke-width="1.7" fill="none"/></svg>
<div class="t" style="left:1199.0px;top:900.9px;font-size:16.18px;color:#c4c4c4;">Only return safe results for stock image searches</div>
<div class="a" style="left:1173px;top:927px;width:18px;height:18px;background:#1f1f1f;border-radius:3px"></div>
<div class="t" style="left:1199.0px;top:928.6px;font-size:16.53px;color:#c4c4c4;">Send usage and performance data to Affinity</div>
<div class="a" style="left:1173px;top:955px;width:18px;height:18px;background:#1f1f1f;border-radius:3px"></div>
<div class="t" style="left:1199.0px;top:956.5px;font-size:16.70px;color:#c4c4c4;">Help improve the product by automatically uploading crash reports</div>
<div class="t" style="left:1171.0px;top:996.8px;font-size:16.76px;color:#c4c4c4;">Store fonts (*.affont) will be loaded from the Affinity Fonts folder on startup:</div>
<div class="a" style="left:1201px;top:1025px;width:339px;height:31px;background:#444444;border-radius:3px"></div>
<div class="t" style="left:1215.0px;top:1030.9px;font-size:17.85px;color:#e6e6e6;">Open Affinity Fonts Folder in Explorer...</div>
<div class="t" style="left:1371.0px;top:1103.5px;font-size:15.93px;color:#b4b4b4;">*Language:</div>
<div class="a" style="left:1468px;top:1096px;width:189px;height:27px;background:#272727;border:1.6px solid #5a7fae;border-radius:4px"></div>
<svg class="a" style="left:1636px;top:1101px;" width="18" height="18" viewBox="0 0 18 18"><path d="M4,6.5 L9,11.5 L14,6.5" stroke="#e6e6e6" stroke-width="1.8" fill="none"/></svg>
<div class="t" style="left:1398.8px;width:600px;text-align:right;top:1152.4px;font-size:16.05px;color:#a8a8a8;font-weight:400">*Requires restart</div>
<div class="a" style="left:1908px;top:1203px;width:112px;height:29px;background:#434343;border-radius:4px"></div>
<div class="t" style="left:1663.7px;width:600px;text-align:center;top:1211.0px;font-size:15.41px;color:#e6e6e6;font-weight:400">Close</div>
<div class="a" style="left:1468px;top:1124px;width:202px;height:309px;background:#333333;border:1.5px solid #4e4e4e"></div>
<div class="t" style="left:1476.0px;top:1136.4px;font-size:16.08px;color:#e8e8e8;">Deutsch</div>
<div class="t" style="left:1476.0px;top:1170.2px;font-size:16.32px;color:#e8e8e8;">English (United Kingdom)</div>
<div class="t" style="left:1476.0px;top:1204.6px;font-size:15.84px;color:#e8e8e8;">English (United States)</div>
<div class="t" style="left:1476.0px;top:1238.5px;font-size:15.99px;color:#e8e8e8;">español</div>
<div class="t" style="left:1476.0px;top:1272.7px;font-size:15.71px;color:#e8e8e8;">français</div>
<div class="t" style="left:1476.0px;top:1305.8px;font-size:16.72px;color:#e8e8e8;">italiano</div>
<div class="t" style="left:1476.0px;top:1340.5px;font-size:16.00px;color:#e8e8e8;">日本語</div>
<div class="t" style="left:1476.0px;top:1374.4px;font-size:16.09px;color:#e8e8e8;">português (Brasil)</div>
<div class="t" style="left:1476.0px;top:1408.6px;font-size:15.86px;color:#e8e8e8;">中文(简体)</div>
<div class="a" style="left:2473px;top:165px;width:8px;height:1323px;background:#303030;"></div>
<div class="a" style="left:2481px;top:165px;width:399px;height:45px;background:#272727;"></div>
<div class="a" style="left:2508px;top:168px;width:64px;height:42px;background:#363636;"></div>
<div class="a" style="left:2490px;top:181px;width:2px;height:12px;background:#8c8c8c;"></div>
<div class="a" style="left:2496px;top:181px;width:2px;height:12px;background:#8c8c8c;"></div>
<div class="t" style="left:2516.0px;top:179.2px;font-size:16.63px;color:#ececec;">Colour</div>
<div class="t" style="left:2580.3px;top:180.3px;font-size:15.38px;color:#c0c0c0;">Swatches</div>
<div class="t" style="left:2662.3px;top:179.8px;font-size:15.92px;color:#c0c0c0;">Stroke</div>
<div class="t" style="left:2723.0px;top:179.7px;font-size:16.09px;color:#c0c0c0;">Appearance</div>
<div class="a" style="left:2852px;top:179.0px;width:16px;height:3px;background:#a8a8a8;border-radius:1px"></div>
<div class="a" style="left:2852px;top:185.2px;width:16px;height:3px;background:#a8a8a8;border-radius:1px"></div>
<div class="a" style="left:2852px;top:191.4px;width:16px;height:3px;background:#a8a8a8;border-radius:1px"></div>
<div class="a" style="left:2481px;top:210px;width:399px;height:353px;background:#363636;"></div>
<svg class="a" style="left:2496px;top:228px;" width="90" height="70" viewBox="0 0 90 70"><circle cx="26.4" cy="27.2" r="18.8" fill="#ffffff" stroke="#4e4e4e" stroke-width="2.6"/>
<circle cx="26.4" cy="27.2" r="9.6" fill="#363636" stroke="#4e4e4e" stroke-width="2.2"/>
<circle cx="17.3" cy="54.3" r="8.5" fill="#dedede"/><path d="M11.5,60 L23,48.5" stroke="#e8283c" stroke-width="1.8"/>
<circle cx="44.8" cy="45.6" r="19" fill="#000" stroke="#4c4c4c" stroke-width="2.2"/>
<path d="M46,10 Q57,12 60,25" stroke="#9a9a9a" stroke-width="2" fill="none"/><path d="M48,6.5 L45,10 L48.5,13 M56.5,22.5 L60,26 L63.5,22.5" stroke="#9a9a9a" stroke-width="2" fill="none"/></svg>
<svg class="a" style="left:2572px;top:230px;" width="34" height="34" viewBox="0 0 34 34"><path d="M5,27 L19,13" stroke="#c4c4c4" stroke-width="4" stroke-linecap="round"/><circle cx="24.5" cy="9.5" r="6.5" fill="#c4825e"/><path d="M17,12 L22,17 L26,13 L21,8 Z" fill="#c4825e"/></svg>
<div class="a" style="left:2603px;top:234px;width:24.5px;height:24.5px;border-radius:50%;background:#ff0000;border:2px solid #4a4a4a"></div>
<div class="a" style="left:2821px;top:252px;width:43px;height:127px;background:#000;"></div>
<div class="a" style="left:2843px;top:253px;width:19px;height:19px;background:#ffffff;"></div>
<div class="a" style="left:2843px;top:274px;width:19px;height:19px;background:#ff0000;"></div>
<div class="a" style="left:2843px;top:295px;width:19px;height:19px;background:#f8cc98;"></div>
<div class="a" style="left:2822px;top:316px;width:19px;height:19px;background:#ffffff;"></div>
<div class="a" style="left:2822px;top:337px;width:19px;height:19px;background:#a8bcd4;"></div>
<div class="a" style="left:2843px;top:337px;width:19px;height:19px;background:#abbfb6;"></div>
<div class="a" style="left:2822px;top:358px;width:19px;height:19px;background:#f5e5cc;"></div>
<div class="a" style="left:2843px;top:358px;width:19px;height:19px;background:#c9e2e6;"></div>
<div class="a" style="left:2569.6px;top:264px;width:222px;height:222px;border-radius:50%;background:conic-gradient(from 90deg,#f00,#ff0,#0f0,#0ff,#00f,#f0f,#f00);-webkit-mask:radial-gradient(circle,transparent 87.5px,#000 88.5px);mask:radial-gradient(circle,transparent 87.5px,#000 88.5px)"></div>
<svg class="a" style="left:2630px;top:290px;" width="150" height="170" viewBox="0 0 150 170"><defs><linearGradient id="tw" x1="0" y1="0" x2="0" y2="1"><stop offset="0" stop-color="#000"/><stop offset="1" stop-color="#fff"/></linearGradient>
<linearGradient id="tr" x1="6" y1="85" x2="140" y2="85" gradientUnits="userSpaceOnUse"><stop offset="0" stop-color="#f00" stop-opacity="0"/><stop offset="1" stop-color="#f00" stop-opacity="1"/></linearGradient></defs>
<path d="M6,7 L140,85 L6,163 Z" fill="url(#tw)"/><path d="M6,7 L140,85 L6,163 Z" fill="url(#tr)"/></svg>
<div class="a" style="left:2627px;top:288px;width:18px;height:18px;border-radius:50%;background:#000;border:3px solid #fff"></div>
<div class="a" style="left:2773px;top:366px;width:18px;height:18px;border-radius:50%;background:#f00;border:3px solid #fff"></div>
<div class="t" style="left:1922.0px;width:600px;text-align:right;top:439.3px;font-size:14.07px;color:#a0a0a0;font-weight:400">H: 0</div>
<div class="t" style="left:1922.0px;width:600px;text-align:right;top:459.1px;font-size:14.00px;color:#a0a0a0;font-weight:400">S: 0</div>
<div class="t" style="left:1922.0px;width:600px;text-align:right;top:479.3px;font-size:14.00px;color:#a0a0a0;font-weight:400">L: 0</div>
<div class="t" style="left:2774.0px;top:472.9px;font-size:15.00px;color:#a0a0a0;">#:</div>
<div class="a" style="left:2791px;top:467px;width:71px;height:26px;background:#262626;border-radius:3px"></div>
<div class="t" style="left:2793.3px;top:473.2px;font-size:15.79px;color:#ececec;">000000</div>
<div class="t" style="left:2502.0px;top:504.8px;font-size:14.75px;color:#b4b4b4;">Opacity</div>
<div class="a" style="left:2508.5px;top:525px;width:24px;height:24px;border-radius:50%;background:#000;border:2px solid #4a4a4a"></div>
<div class="a" style="left:2542px;top:532px;width:216px;height:14px;border-radius:7px;background:linear-gradient(90deg,rgba(62,62,62,0) 0%,rgba(62,62,62,0.55) 45%,rgba(62,62,62,0.97) 100%),conic-gradient(#ffffff 25%,#e0e0e0 0 50%,#ffffff 0 75%,#e0e0e0 0) 0 0/14px 14px"></div>
<div class="a" style="left:2743px;top:530.4px;width:17.6px;height:17.6px;border-radius:50%;background:#3a3a3a;border:2.5px solid #f4f4f4"></div>
<div class="a" style="left:2770px;top:523px;width:86px;height:26px;background:#3d3d3d;border-radius:3px"></div>
<div class="a" style="left:2770px;top:523px;width:63.6px;height:26px;background:#222222;border-radius:3px 0 0 3px"></div>
<div class="t" style="left:2778.0px;top:530.9px;font-size:15.52px;color:#ececec;">100 %</div>
<svg class="a" style="left:2836px;top:527px;" width="18" height="18" viewBox="0 0 18 18"><path d="M4,7 L9,12 L14,7" stroke="#e0e0e0" stroke-width="1.6" fill="none"/></svg>
<div class="a" style="left:2481px;top:563px;width:399px;height:3px;background:#272727;"></div>
<div class="a" style="left:2481px;top:563px;width:399px;height:45px;background:#272727;"></div>
<div class="a" style="left:2508px;top:566px;width:61px;height:42px;background:#363636;"></div>
<div class="a" style="left:2490px;top:579px;width:2px;height:12px;background:#8c8c8c;"></div>
<div class="a" style="left:2496px;top:579px;width:2px;height:12px;background:#8c8c8c;"></div>
<div class="t" style="left:2516.5px;top:578.6px;font-size:15.06px;color:#ececec;">Layers</div>
<div class="t" style="left:2577.5px;top:577.6px;font-size:16.19px;color:#c0c0c0;">Brushes</div>
<div class="t" style="left:2649.0px;top:578.1px;font-size:15.56px;color:#c0c0c0;">Quick FX</div>
<div class="t" style="left:2728.0px;top:578.4px;font-size:15.24px;color:#c0c0c0;">Styles</div>
<div class="a" style="left:2852px;top:577.0px;width:16px;height:3px;background:#a8a8a8;border-radius:1px"></div>
<div class="a" style="left:2852px;top:583.2px;width:16px;height:3px;background:#a8a8a8;border-radius:1px"></div>
<div class="a" style="left:2852px;top:589.4px;width:16px;height:3px;background:#a8a8a8;border-radius:1px"></div>
<div class="a" style="left:2481px;top:608px;width:399px;height:42px;background:#383838;"></div>
<div class="t" style="left:2493.0px;top:622.5px;font-size:14.59px;color:#909090;">Opacity:</div>
<div class="a" style="left:2553px;top:614px;width:82px;height:30px;background:#2e2e2e;border-radius:4px"></div>
<div class="t" style="left:2564.0px;top:622.1px;font-size:15.24px;color:#a8a8a8;">100 %</div>
<svg class="a" style="left:2609px;top:620px;" width="18" height="18" viewBox="0 0 18 18"><path d="M4,6.5 L9,11.5 L14,6.5" stroke="#a8a8a8" stroke-width="1.6" fill="none"/></svg>
<div class="a" style="left:2641px;top:614px;width:165px;height:30px;background:#2e2e2e;border-radius:4px"></div>
<div class="t" style="left:2649.0px;top:621.8px;font-size:16.54px;color:#a8a8a8;">Normal</div>
<svg class="a" style="left:2785px;top:620px;" width="18" height="18" viewBox="0 0 18 18"><path d="M4,6.5 L9,11.5 L14,6.5" stroke="#a8a8a8" stroke-width="1.6" fill="none"/></svg>
<svg class="a" style="left:2814px;top:620px;" width="18" height="18" viewBox="0 0 18 18"><rect x="7" y="0" width="4" height="4.5" fill="#a8a8a8" transform="rotate(0 9 9)"/><rect x="7" y="0" width="4" height="4.5" fill="#a8a8a8" transform="rotate(45 9 9)"/><rect x="7" y="0" width="4" height="4.5" fill="#a8a8a8" transform="rotate(90 9 9)"/><rect x="7" y="0" width="4" height="4.5" fill="#a8a8a8" transform="rotate(135 9 9)"/><rect x="7" y="0" width="4" height="4.5" fill="#a8a8a8" transform="rotate(180 9 9)"/><rect x="7" y="0" width="4" height="4.5" fill="#a8a8a8" transform="rotate(225 9 9)"/><rect x="7" y="0" width="4" height="4.5" fill="#a8a8a8" transform="rotate(270 9 9)"/><rect x="7" y="0" width="4" height="4.5" fill="#a8a8a8" transform="rotate(315 9 9)"/><circle cx="9" cy="9" r="6.3" fill="#a8a8a8"/><circle cx="9" cy="9" r="2.5" fill="#383838"/></svg>
<svg class="a" style="left:2849px;top:618px;" width="16" height="22" viewBox="0 0 16 22"><path d="M3.5,10 L3.5,6 Q3.5,1.5 8,1.5 Q12.5,1.5 12.5,6 L12.5,8" stroke="#a8a8a8" stroke-width="2" fill="none"/><rect x="1.5" y="10" width="13" height="10" rx="1.5" fill="#a8a8a8"/></svg>
<div class="a" style="left:2481px;top:650px;width:399px;height:559px;background:#272727;"></div>
<div class="a" style="left:2481px;top:652px;width:370px;height:394px;background:#000;"></div>
<div class="a" style="left:2483px;top:654px;width:24px;height:54px;background:#343434;"></div>
<div class="a" style="left:2509px;top:654px;width:54px;height:54px;background:#3a3a3a;"></div>
<div class="a" style="left:2512px;top:657px;width:48px;height:48px;background:#262626;"></div>
<div class="a" style="left:2565px;top:654px;width:284px;height:54px;background:#343434;"></div>
<div class="t" style="left:2569.7px;top:675.1px;font-size:15.20px;color:#ececec;">Eyes</div>
<div class="a" style="left:2820.5px;top:674.5px;width:13px;height:13px;border-radius:50%;background:#a0a0a0"></div>
<svg class="a" style="left:2491px;top:674px;" width="10" height="12" viewBox="0 0 10 12"><path d="M1,1 L7,5.5 L1,10" stroke="#9a9a9a" stroke-width="1.6" fill="none"/></svg>
<div class="a" style="left:2483px;top:710px;width:24px;height:54px;background:#343434;"></div>
<div class="a" style="left:2509px;top:710px;width:54px;height:54px;background:#3a3a3a;"></div>
<div class="a" style="left:2512px;top:713px;width:48px;height:48px;background:#262626;"></div>
<div class="a" style="left:2565px;top:710px;width:284px;height:54px;background:#343434;"></div>
<div class="t" style="left:2569.7px;top:729.3px;font-size:17.40px;color:#ececec;">Hand</div>
<div class="a" style="left:2820.5px;top:730.5px;width:13px;height:13px;border-radius:50%;background:#a0a0a0"></div>
<svg class="a" style="left:2488px;top:720px;" width="18" height="22" viewBox="0 0 18 22"><path d="M3.3,1.5 L3.3,16.5" stroke="#a0a0a0" stroke-width="1.5"/><circle cx="3.3" cy="9" r="2.4" fill="#343434" stroke="#a0a0a0" stroke-width="1.5"/><circle cx="3.3" cy="1.8" r="1.8" fill="#a0a0a0"/><circle cx="3.3" cy="16.3" r="1.8" fill="#a0a0a0"/><path d="M11.4,2.2 Q-0.5,9 11.4,16" stroke="#a0a0a0" stroke-width="1.5" fill="none"/></svg>
<svg class="a" style="left:2491px;top:742px;" width="10" height="12" viewBox="0 0 10 12"><path d="M1,1 L7,5.5 L1,10" stroke="#9a9a9a" stroke-width="1.6" fill="none"/></svg>
<div class="a" style="left:2483px;top:766px;width:24px;height:54px;background:#343434;"></div>
<div class="a" style="left:2509px;top:766px;width:54px;height:54px;background:#3a3a3a;"></div>
<div class="a" style="left:2512px;top:769px;width:48px;height:48px;background:#262626;"></div>
<div class="a" style="left:2565px;top:766px;width:284px;height:54px;background:#343434;"></div>
<div class="t" style="left:2569.7px;top:785.3px;font-size:17.35px;color:#ececec;">Arm</div>
<div class="a" style="left:2820.5px;top:786.5px;width:13px;height:13px;border-radius:50%;background:#a0a0a0"></div>
<svg class="a" style="left:2488px;top:775px;" width="16" height="20" viewBox="0 0 16 20"><rect x="1" y="1" width="6" height="6" fill="#a0a0a0"/><path d="M11.4,3.5 L14.4,8.9 L8.4,8.9 Z" fill="#a0a0a0"/><circle cx="3.9" cy="13" r="3" fill="#a0a0a0"/><path d="M11.4,12.3 L14.6,15.5 L11.4,18.7 L8.2,15.5 Z" fill="#a0a0a0"/></svg>
<svg class="a" style="left:2491px;top:798px;" width="10" height="12" viewBox="0 0 10 12"><path d="M1,1 L7,5.5 L1,10" stroke="#9a9a9a" stroke-width="1.6" fill="none"/></svg>
<div class="a" style="left:2483px;top:822px;width:24px;height:54px;background:#343434;"></div>
<div class="a" style="left:2509px;top:822px;width:54px;height:54px;background:#3a3a3a;"></div>
<div class="a" style="left:2512px;top:825px;width:48px;height:48px;background:#262626;"></div>
<div class="a" style="left:2565px;top:822px;width:284px;height:54px;background:#343434;"></div>
<div class="t" style="left:2569.7px;top:842.9px;font-size:15.47px;color:#ececec;">Face</div>
<div class="a" style="left:2820.5px;top:842.5px;width:13px;height:13px;border-radius:50%;background:#a0a0a0"></div>
<svg class="a" style="left:2491px;top:842px;" width="10" height="12" viewBox="0 0 10 12"><path d="M1,1 L7,5.5 L1,10" stroke="#9a9a9a" stroke-width="1.6" fill="none"/></svg>
<div class="a" style="left:2483px;top:878px;width:24px;height:54px;background:#343434;"></div>
<div class="a" style="left:2509px;top:878px;width:54px;height:54px;background:#3a3a3a;"></div>
<div class="a" style="left:2512px;top:881px;width:48px;height:48px;background:#262626;"></div>
<div class="a" style="left:2565px;top:878px;width:284px;height:54px;background:#343434;"></div>
<div class="t" style="left:2569.7px;top:897.1px;font-size:17.61px;color:#ececec;">Stars &amp; flowers</div>
<div class="a" style="left:2820.5px;top:898.5px;width:13px;height:13px;border-radius:50%;background:#a0a0a0"></div>
<svg class="a" style="left:2491px;top:898px;" width="10" height="12" viewBox="0 0 10 12"><path d="M1,1 L7,5.5 L1,10" stroke="#9a9a9a" stroke-width="1.6" fill="none"/></svg>
<div class="a" style="left:2483px;top:934px;width:24px;height:54px;background:#343434;"></div>
<div class="a" style="left:2509px;top:934px;width:54px;height:54px;background:#3a3a3a;"></div>
<div class="a" style="left:2512px;top:937px;width:48px;height:48px;background:#262626;"></div>
<div class="a" style="left:2565px;top:934px;width:284px;height:54px;background:#343434;"></div>
<div class="t" style="left:2569.7px;top:954.5px;font-size:16.00px;color:#ececec;">Leaves</div>
<div class="a" style="left:2820.5px;top:954.5px;width:13px;height:13px;border-radius:50%;background:#a0a0a0"></div>
<svg class="a" style="left:2491px;top:954px;" width="10" height="12" viewBox="0 0 10 12"><path d="M1,1 L7,5.5 L1,10" stroke="#9a9a9a" stroke-width="1.6" fill="none"/></svg>
<div class="a" style="left:2483px;top:990px;width:24px;height:54px;background:#343434;"></div>
<div class="a" style="left:2509px;top:990px;width:54px;height:54px;background:#3a3a3a;"></div>
<div class="a" style="left:2512px;top:993px;width:48px;height:48px;background:#262626;"></div>
<div class="a" style="left:2565px;top:990px;width:284px;height:54px;background:#343434;"></div>
<div class="t" style="left:2569.7px;top:1009.1px;font-size:17.58px;color:#ececec;">Background</div>
<div class="a" style="left:2820.5px;top:1010.5px;width:13px;height:13px;border-radius:50%;background:#a0a0a0"></div>
<svg class="a" style="left:2488px;top:1007px;" width="16" height="20" viewBox="0 0 16 20"><rect x="1" y="1" width="6" height="6" fill="#a0a0a0"/><path d="M11.4,3.5 L14.4,8.9 L8.4,8.9 Z" fill="#a0a0a0"/><circle cx="3.9" cy="13" r="3" fill="#a0a0a0"/><path d="M11.4,12.3 L14.6,15.5 L11.4,18.7 L8.2,15.5 Z" fill="#a0a0a0"/></svg>
<svg class="a" style="left:2512px;top:657px;" width="48" height="48" viewBox="0 0 48 48"><rect x="0" y="12" width="48" height="24" fill="#fdf0f3"/>
<path d="M2,17 Q10,10 19,16 L19,19 Q11,15 2,17 Z" fill="#4a0a5c"/><path d="M29,16 Q38,10 46,17 Q37,15 29,19 Z" fill="#4a0a5c"/>
<path d="M3,22 Q10,19 17,24 Q10,22 3,22 Z M7,22 A3,3 0 0 0 13,23 Z" fill="#4a0a5c"/><path d="M31,24 Q38,19 45,22 Q38,22 31,24 Z M35,23 A3,3 0 0 0 41,22 Z" fill="#4a0a5c"/></svg>
<svg class="a" style="left:2512px;top:713px;" width="48" height="48" viewBox="0 0 48 48"><path d="M10,46 Q8,36 15,30 Q20,25 27,24 Q22,22 12,23 Q11,21 16,20 Q24,20 29,21 Q26,15 22,10 Q24,8 28,12 Q31,16 33,18 Q34,12 31,3 Q33,2 35,8 Q37,14 37,20 Q37,28 31,36 Q26,43 20,47 Z" fill="#ffb6ca"/><path d="M10,46 Q8,38 14,31 Q12,40 15,46 Z" fill="#ff7ea2"/></svg>
<svg class="a" style="left:2512px;top:769px;" width="48" height="48" viewBox="0 0 48 48"><rect x="12" y="0" width="25" height="48" fill="#ffc0d2"/><path d="M12,0 L18,0 Q17,24 19,46 L12,48 Z" fill="#ff7ea2"/></svg>
<svg class="a" style="left:2512px;top:825px;" width="48" height="48" viewBox="0 0 48 48"><path d="M11,12 Q11,1 24,1 Q37,1 37,12 L29,12 L29,20 L37,20 L37,36 Q36,46 24,47 Q12,46 11,36 L11,20 L19,20 L19,12 Z" fill="#fdeef2"/>
<path d="M24,2 L24,47" stroke="#c8b0b8" stroke-width="0.6"/><path d="M11,32 Q14,43 22,47 L16,36 Z M37,32 Q34,43 26,47 L32,36 Z" fill="#ff5a88"/><ellipse cx="24" cy="28" rx="3.5" ry="1.8" fill="#ff6a90"/><rect x="36" y="20" width="3" height="5" fill="#ff5a88"/></svg>
<svg class="a" style="left:2512px;top:881px;" width="48" height="48" viewBox="0 0 48 48"><circle cx="6" cy="14" r="1.6" fill="#ff5a88"/><circle cx="9" cy="7" r="1" fill="#fff"/><circle cx="10" cy="8.5" r="1" fill="#ff5a88"/><circle cx="4" cy="10" r="0.7" fill="#ddd"/><circle cx="44" cy="11" r="0.9" fill="#ddd"/><circle cx="39" cy="22" r="1" fill="#ff5a88"/><circle cx="37" cy="26" r="1" fill="#fff"/><circle cx="37" cy="30" r="1.5" fill="#ff5a88"/><circle cx="46" cy="16" r="0.6" fill="#ddd"/><circle cx="7" cy="43" r="1.4" fill="#ff5a88"/><circle cx="6" cy="40" r="0.8" fill="#fff"/><circle cx="2" cy="45" r="1" fill="#ff5a88"/><circle cx="9" cy="42" r="0.6" fill="#ddd"/><circle cx="43" cy="22" r="0.6" fill="#ddd"/></svg>
<svg class="a" style="left:2512px;top:937px;" width="48" height="48" viewBox="0 0 48 48"><path d="M12,18 Q6,10 2,10 Q7,13 12,18 Z M12,18 Q10,8 15,1 Q13,9 12,18 Z M12,18 Q14,10 17,4" stroke="#1fa878" stroke-width="2" fill="none"/>
<path d="M8,44 Q6,36 8,26 Q10,35 8,44 Z M8,36 Q4,30 0,32 Q5,34 8,36 Z" fill="#1fa878" stroke="#1fa878" stroke-width="1.5"/><path d="M36,30 Q38,18 48,8 Q42,22 36,30 Z M36,30 Q36,22 40,16" stroke="#1fa878" stroke-width="2" fill="none"/></svg>
<svg class="a" style="left:2512px;top:993px;" width="48" height="48" viewBox="0 0 48 48"><rect x="0" y="10" width="48" height="28" fill="#ffe05b"/></svg>
<div class="a" style="left:2481px;top:1209px;width:399px;height:40px;background:#363636;"></div>
<div class="a" style="left:2489px;top:1212px;width:32px;height:30px;background:#262626;"></div>
<svg class="a" style="left:2489px;top:1212px;" width="32" height="30" viewBox="0 0 32 30"><rect x="6" y="4" width="13" height="13" rx="1.5" fill="none" stroke="#c8c8c8" stroke-width="1.6"/><path d="M9,20 L22,20 L22,7 M12,23 L25,23 L25,10" stroke="#c8c8c8" stroke-width="1.6" fill="none"/></svg>
<svg class="a" style="left:2631px;top:1219px;" width="22" height="19" viewBox="0 0 22 19"><rect x="0.5" y="0.5" width="21" height="18" rx="2.5" fill="#a8a8a8"/><circle cx="11" cy="9.5" r="4.5" fill="#363636"/></svg>
<svg class="a" style="left:2659px;top:1216px;" width="26" height="26" viewBox="0 0 26 26"><circle cx="13" cy="13" r="11" fill="none" stroke="#a8a8a8" stroke-width="1.6"/><path d="M20,6 A10,10 0 0 1 9,22 Z" fill="#a8a8a8"/></svg>
<svg class="a" style="left:2692px;top:1215px;" width="22" height="28" viewBox="0 0 22 28"><path d="M1,3 L20,3 M1,25 L20,25" stroke="#a8a8a8" stroke-width="1.5"/><path d="M3,22 L3,10 Q3,7 7,7 M1,13 L7,13" stroke="#a8a8a8" stroke-width="2.2" fill="none"/><path d="M9,9 L19,22 M19,9 L9,22" stroke="#a8a8a8" stroke-width="2.4"/></svg>
<svg class="a" style="left:2721px;top:1217px;" width="24" height="24" viewBox="0 0 24 24"><path d="M4,21 Q2,12 6,3 Q13,1 19,3 Q23,12 21,21 Q13,23 4,21 Z" fill="none" stroke="#a8a8a8" stroke-width="1.5"/><path d="M3,9 Q12,7 21,9 M3,15 Q12,13 22,15 M9,3 Q7,12 9,22 M15,2 Q15,12 16,22" stroke="#a8a8a8" stroke-width="1.2" fill="none"/></svg>
<svg class="a" style="left:2788px;top:1215px;" width="24" height="28" viewBox="0 0 24 28"><path d="M2,5 L15,5 L15,26 L2,26 Z" fill="none" stroke="#a8a8a8" stroke-width="1.6"/><path d="M5,12 L12,12 M5,16 L12,16 M5,20 L12,20" stroke="#a8a8a8" stroke-width="2"/><path d="M19,0 L19,9 M14.5,4.5 L23.5,4.5" stroke="#a8a8a8" stroke-width="1.5"/></svg>
<svg class="a" style="left:2818px;top:1215px;" width="20" height="28" viewBox="0 0 20 28"><rect x="1" y="2" width="17" height="23" fill="none" stroke="#a8a8a8" stroke-width="1.6"/><rect x="4.0" y="5.0" width="3.5" height="3.5" fill="#a8a8a8"/><rect x="8.5" y="9.2" width="3.5" height="3.5" fill="#a8a8a8"/><rect x="4.0" y="13.4" width="3.5" height="3.5" fill="#a8a8a8"/><rect x="8.5" y="17.6" width="3.5" height="3.5" fill="#a8a8a8"/><rect x="4.0" y="21.8" width="3.5" height="3.5" fill="#a8a8a8"/><rect x="8.5" y="5.0" width="3.5" height="3.5" fill="#888"/><rect x="4.0" y="9.2" width="3.5" height="3.5" fill="#888"/><rect x="8.5" y="13.4" width="3.5" height="3.5" fill="#888"/><rect x="4.0" y="17.6" width="3.5" height="3.5" fill="#888"/><rect x="8.5" y="21.8" width="3.5" height="3.5" fill="#888"/></svg>
<svg class="a" style="left:2848px;top:1213px;" width="22" height="30" viewBox="0 0 22 30"><path d="M1,6 L21,6 M8,6 L8,2 L14,2 L14,6" stroke="#a8a8a8" stroke-width="1.6" fill="none"/><path d="M3,8 L4,28 L18,28 L19,8" stroke="#a8a8a8" stroke-width="1.6" fill="none"/><path d="M8,11 L8,25 M11,11 L11,25 M14,11 L14,25" stroke="#a8a8a8" stroke-width="1.4"/></svg>
<div class="a" style="left:2481px;top:1249px;width:399px;height:45px;background:#272727;"></div>
<div class="a" style="left:2508px;top:1252px;width:87px;height:42px;background:#363636;"></div>
<div class="a" style="left:2490px;top:1265px;width:2px;height:12px;background:#8c8c8c;"></div>
<div class="a" style="left:2496px;top:1265px;width:2px;height:12px;background:#8c8c8c;"></div>
<div class="t" style="left:2516.5px;top:1263.9px;font-size:15.78px;color:#ececec;">Transform</div>
<div class="t" style="left:2603.3px;top:1263.2px;font-size:16.66px;color:#c0c0c0;">Navigator</div>
<div class="t" style="left:2690.3px;top:1263.5px;font-size:16.36px;color:#c0c0c0;">History</div>
<div class="a" style="left:2852px;top:1263.0px;width:16px;height:3px;background:#a8a8a8;border-radius:1px"></div>
<div class="a" style="left:2852px;top:1269.2px;width:16px;height:3px;background:#a8a8a8;border-radius:1px"></div>
<div class="a" style="left:2852px;top:1275.4px;width:16px;height:3px;background:#a8a8a8;border-radius:1px"></div>
<div class="a" style="left:2481px;top:1294px;width:399px;height:194px;background:#363636;"></div>
<svg class="a" style="left:2505px;top:1344px;" width="56" height="56" viewBox="0 0 56 56"><path d="M0,0 L10,0 L10,3 L21,3 L21,0 L33,0 L33,3 L44,3 L44,0 L54,0 L54,10 L51,10 L51,22 L54,22 L54,33 L51,33 L51,44 L54,44 L54,54 L44,54 L44,51 L33,51 L33,54 L21,54 L21,51 L10,51 L10,54 L0,54 L0,44 L3,44 L3,33 L0,33 L0,22 L3,22 L3,10 L0,10 Z" fill="#6a6a6a"/></svg>
<div class="t" style="left:2583.4px;top:1320.9px;font-size:15.50px;color:#7c7c7c;">X:</div>
<div class="a" style="left:2602px;top:1312px;width:97px;height:30px;background:#2e2e2e;border-radius:4px"></div>
<div class="t" style="left:2611.4px;top:1320.4px;font-size:16.10px;color:#a0a0a0;">0 px</div>
<div class="t" style="left:2583.4px;top:1356.5px;font-size:15.50px;color:#7c7c7c;">Y:</div>
<div class="a" style="left:2602px;top:1347.6px;width:97px;height:30px;background:#2e2e2e;border-radius:4px"></div>
<div class="t" style="left:2611.4px;top:1356.0px;font-size:16.10px;color:#a0a0a0;">0 px</div>
<div class="t" style="left:2583.4px;top:1401.6px;font-size:15.50px;color:#7c7c7c;">R:</div>
<div class="a" style="left:2602px;top:1392.7px;width:97px;height:30px;background:#2e2e2e;border-radius:4px"></div>
<div class="t" style="left:2611.4px;top:1401.1px;font-size:16.10px;color:#a0a0a0;">0 °</div>
<svg class="a" style="left:2679px;top:1398.7px;" width="18" height="18" viewBox="0 0 18 18"><path d="M4,6 L9,11 L14,6" stroke="#a0a0a0" stroke-width="1.6" fill="none"/></svg>
<div class="t" style="left:2717.0px;top:1320.9px;font-size:15.50px;color:#7c7c7c;">W:</div>
<div class="a" style="left:2741px;top:1312px;width:97px;height:30px;background:#2e2e2e;border-radius:4px"></div>
<div class="t" style="left:2750.4px;top:1320.4px;font-size:16.10px;color:#a0a0a0;">0 px</div>
<div class="t" style="left:2721.4px;top:1356.5px;font-size:15.50px;color:#7c7c7c;">H:</div>
<div class="a" style="left:2741px;top:1347.6px;width:97px;height:30px;background:#2e2e2e;border-radius:4px"></div>
<div class="t" style="left:2750.4px;top:1356.0px;font-size:16.10px;color:#a0a0a0;">0 px</div>
<div class="t" style="left:2724.2px;top:1401.6px;font-size:15.50px;color:#7c7c7c;">S:</div>
<div class="a" style="left:2741px;top:1392.7px;width:97px;height:30px;background:#2e2e2e;border-radius:4px"></div>
<div class="t" style="left:2750.4px;top:1401.1px;font-size:16.10px;color:#a0a0a0;">0 °</div>
<svg class="a" style="left:2818px;top:1398.7px;" width="18" height="18" viewBox="0 0 18 18"><path d="M4,6 L9,11 L14,6" stroke="#a0a0a0" stroke-width="1.6" fill="none"/></svg>
<svg class="a" style="left:2855px;top:1329px;" width="14" height="32" viewBox="0 0 14 32"><path d="M3,13 L3,5 Q3,2 7,2 Q11,2 11,5 L11,13 M3,19 L3,27 Q3,30 7,30 Q11,30 11,27 L11,19" stroke="#a0a0a0" stroke-width="1.6" fill="none"/><path d="M0,16 L14,16" stroke="#a0a0a0" stroke-width="1.4"/></svg>
<div class="a" style="left:2771px;top:1435px;width:67px;height:38px;background:#434343;border-radius:4px"></div>
<div class="a" style="left:2816px;top:1435px;width:1px;height:38px;background:#303030;"></div>
<svg class="a" style="left:2776px;top:1440px;" width="36" height="28" viewBox="0 0 36 28"><rect x="8" y="4" width="20" height="20" fill="none" stroke="#707070" stroke-width="1.5" stroke-dasharray="4 3"/><rect x="6" y="13" width="11" height="11" rx="3" fill="#6a6a6a"/></svg>
<svg class="a" style="left:2818px;top:1445px;" width="18" height="18" viewBox="0 0 18 18"><path d="M4,7 L9,12 L14,7" stroke="#e0e0e0" stroke-width="1.6" fill="none"/></svg>
<div class="t" style="left:35.4px;top:1499.2px;font-size:17.69px;color:#f2f2f2;font-weight:700;">Drag</div>
<div class="t" style="left:81.3px;top:1499.2px;font-size:17.66px;color:#b4b4b4;">to marquee select.</div>
<div class="t" style="left:233.0px;top:1500.4px;font-size:16.32px;color:#f2f2f2;font-weight:700;">Click</div>
<div class="t" style="left:277.7px;top:1499.0px;font-size:17.99px;color:#b4b4b4;">an object to select it.</div>
<div class="t" style="left:447.3px;top:1499.6px;font-size:17.25px;color:#f2f2f2;font-weight:700;">Ctrl</div>
<div class="t" style="left:482.7px;top:1498.8px;font-size:18.18px;color:#b4b4b4;">during marquee select to toggle intersection behaviour.</div>
<svg class="a" style="left:2860px;top:1506px;" width="16" height="18" viewBox="0 0 16 18"><rect x="11" y="3" width="2.2" height="2.2" fill="#b0b0b0"/><rect x="8" y="6" width="2.2" height="2.2" fill="#b0b0b0"/><rect x="11" y="6" width="2.2" height="2.2" fill="#b0b0b0"/><rect x="5" y="9" width="2.2" height="2.2" fill="#b0b0b0"/><rect x="8" y="9" width="2.2" height="2.2" fill="#b0b0b0"/><rect x="11" y="9" width="2.2" height="2.2" fill="#b0b0b0"/><rect x="2" y="12" width="2.2" height="2.2" fill="#b0b0b0"/><rect x="5" y="12" width="2.2" height="2.2" fill="#b0b0b0"/><rect x="8" y="12" width="2.2" height="2.2" fill="#b0b0b0"/><rect x="11" y="12" width="2.2" height="2.2" fill="#b0b0b0"/></svg>
<div class="a" style="left:913px;top:1469px;width:692px;height:10px;background:#808080;border-radius:5px"></div>
<svg class="a" style="left:80px;top:1466px;" width="14" height="16" viewBox="0 0 14 16"><path d="M12,2 L12,14 L1,8 Z" fill="#808080"/></svg>
<svg class="a" style="left:2425px;top:1468px;" width="14" height="16" viewBox="0 0 14 16"><path d="M2,2 L2,14 L13,8 Z" fill="#808080"/></svg>
<div class="a" style="left:2454px;top:658px;width:10px;height:352px;background:#808080;border-radius:5px"></div>
<svg class="a" style="left:2452px;top:213px;" width="14" height="14" viewBox="0 0 14 14"><path d="M7,1.5 L12.5,12.5 L1.5,12.5 Z" fill="#808080"/></svg>
<svg class="a" style="left:2452px;top:1441px;" width="14" height="14" viewBox="0 0 14 14"><path d="M1.5,1.5 L12.5,1.5 L7,12.5 Z" fill="#808080"/></svg>
<div class="a" style="left:0px;top:1526px;width:2880px;height:2px;background:#262626;"></div></body></html>
